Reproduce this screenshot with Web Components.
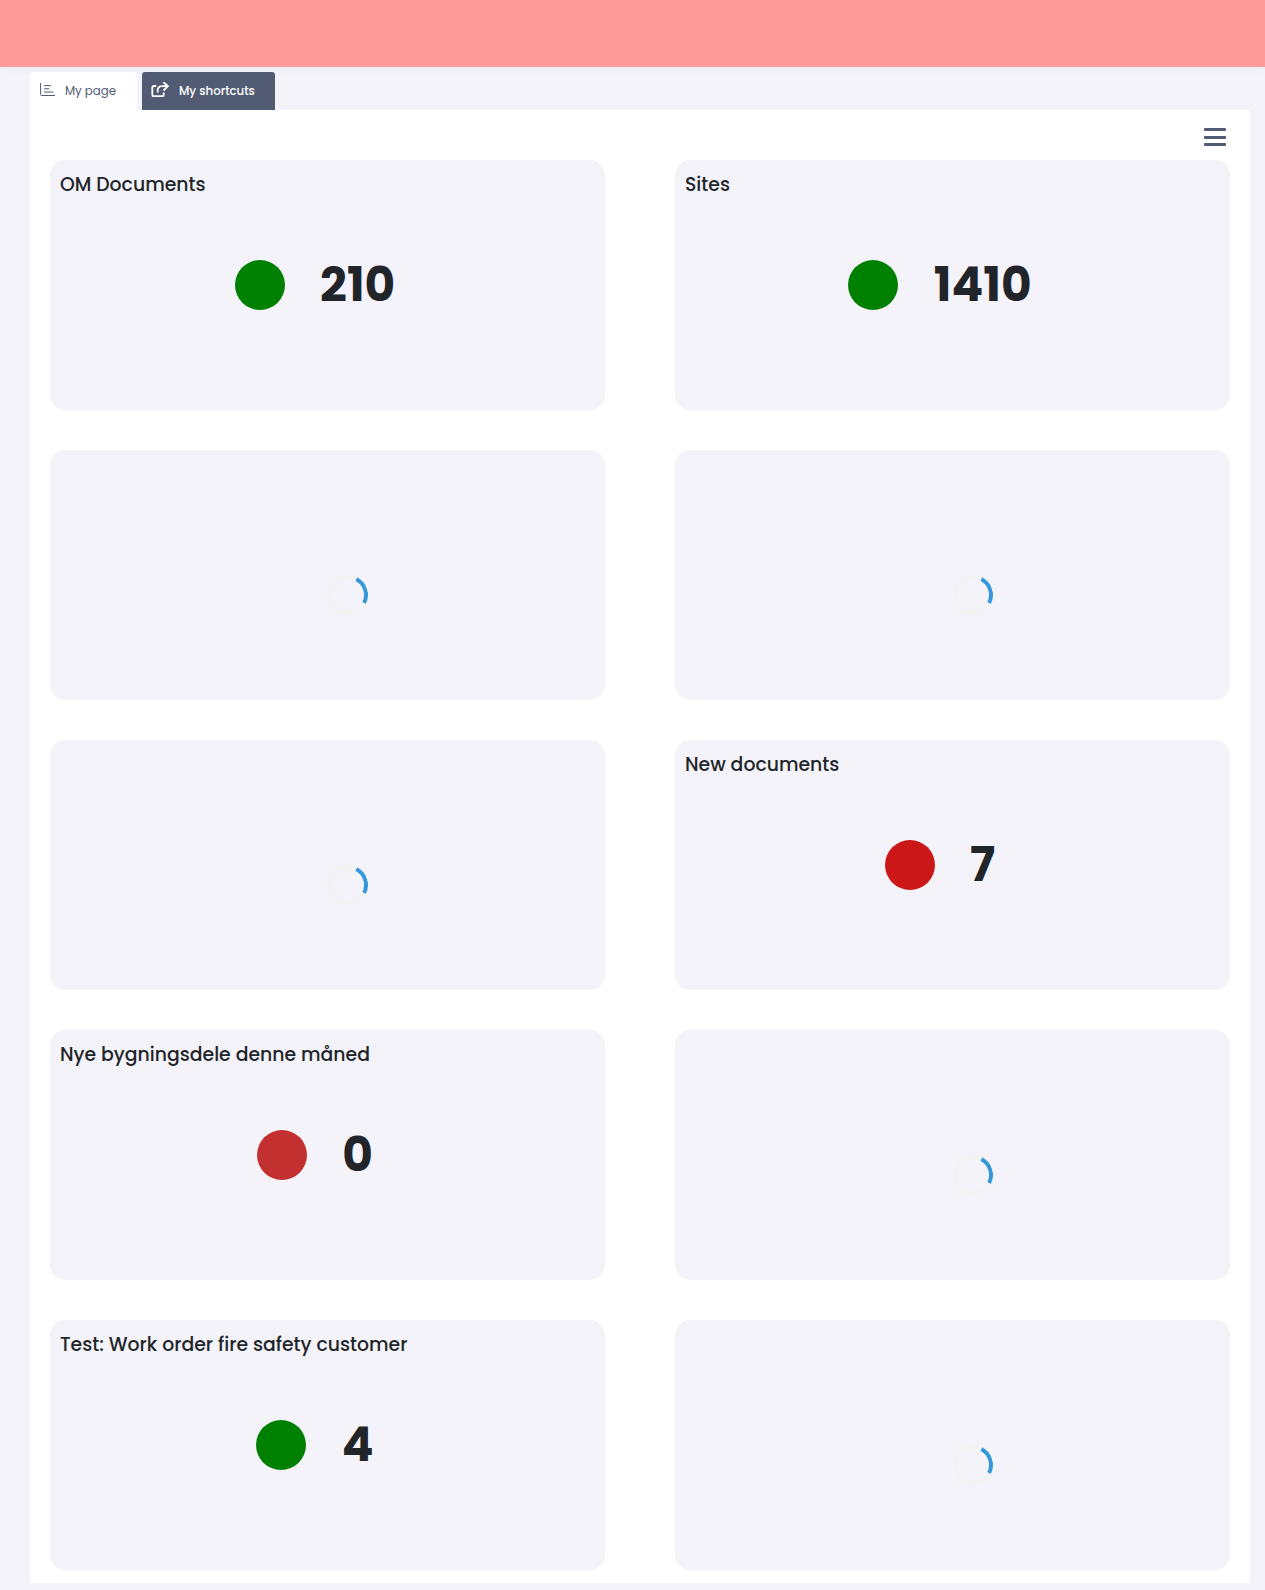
<!DOCTYPE html>
<html lang="en">
<head>
<meta charset="utf-8">
<title>My page</title>
<style>
html,body{margin:0;padding:0}
body{background:#f4f3f9;font-family:Poppins,Inter,"Noto Sans",sans-serif;font-size:11.75px;color:#212529}
</style>
</head>
<body>
<dash-page></dash-page>
<script>
const define = (name, html, init) => customElements.define(name, class extends HTMLElement {
  connectedCallback() {
    if (this.shadowRoot) return;
    const t = document.createElement('template');
    t.innerHTML = html;
    this.attachShadow({mode: 'open'}).append(t.content.cloneNode(true));
    if (init) init(this, this.shadowRoot);
  }
});

define('top-banner', `<style>:host{display:block;height:67px;background:#ff9b9b;box-shadow:0 2px 10px rgba(60,60,90,.03)}</style>`);

define('page-tab', `<style>
:host{display:flex;box-sizing:border-box;height:38px;border-radius:3px 3px 0 0;background:#fff;color:#515b73;font-weight:400;line-height:38px;padding-left:9px;white-space:nowrap}
:host([dark]){background:#515b73;color:#fff;font-weight:500}
::slotted(svg){display:block;flex:none;margin:9px 9px 0 0}
</style><slot></slot>`);

define('menu-button', `<style>
:host{display:flex;flex-direction:column;gap:4.5px;width:22px}
i{height:3px;background:#515b73;border-radius:1px}
</style><i></i><i></i><i></i>`);

define('load-spinner', `<style>
:host{display:block;box-sizing:border-box;width:40px;height:40px;border:4px solid #f3f3f3;border-top-color:#3498db;border-radius:50%;transform:rotate(72deg)}
</style>`);

define('dash-card', `<style>
:host{display:block;box-sizing:border-box;height:250px;border-radius:15px;background:#f4f3f9;padding:10px}
.busy{padding:115px 0 0 267.5px}
.title{height:30px;line-height:30px;font-size:18.83px;font-weight:500;white-space:nowrap}
.metric{display:flex;align-items:center;justify-content:center;gap:35.3px;height:50px;margin-top:60px;padding-right:25px}
.dot{width:50px;height:50px;border-radius:50%;background:var(--dot,green)}
.value{font-size:47px;font-weight:700;line-height:50px;padding-bottom:1px}
</style><div id="body"></div>`, (el, root) => {
  const b = root.getElementById('body'), a = n => el.getAttribute(n);
  b.innerHTML = a('label')
    ? `<div class="title">${a('label')}</div>
       <div class="metric"><div class="dot"></div><div class="value">${a('value')}</div></div>`
    : `<div class="busy"><load-spinner></load-spinner></div>`;
});

define('dash-page', `<style>
:host{display:block;height:1590px;overflow:hidden}
.wrap{padding:5px 15px 0 30px}
nav{display:flex;gap:5px}
.one{width:107px}.two{width:133px}
main{background:#fff;box-sizing:border-box;height:1473px;padding:0 20px}
.tools{display:flex;justify-content:flex-end;height:32px;padding:18px 4px 0 0}
.grid{display:grid;grid-template-columns:555px 555px;gap:40px 70px}
</style>
<top-banner></top-banner>
<div class="wrap">
<nav>
<page-tab class="one">
<svg width="17" height="18" viewBox="0 0 17 18" fill="none" stroke="#515b73" stroke-linecap="round"><path d="M1.6 2.5v11q0 1 1 1h13M5.5 4.6h6.3M5.5 7.8h4.5M5.5 11h8.5"/></svg>
<span>My page</span></page-tab>
<page-tab class="two" dark>
<svg width="19" height="18" viewBox="0 0 19 18" fill="none" stroke="#fff" stroke-width="1.8" stroke-linecap="round" stroke-linejoin="round"><path d="M4.5 5H3Q1.3 5 1.3 6.7v7.2q0 1.3 1.3 1.3h8.8q1.3 0 1.3-1.3V12.2M6.7 10.8c-.6-3.8 1.1-5.6 4.4-5.6h5.4M13 1.7l4 3.5-4 3.8"/></svg>
<span>My shortcuts</span></page-tab>
</nav>
<main>
<div class="tools"><menu-button></menu-button></div>
<div class="grid">
<dash-card label="OM Documents" value="210"></dash-card>
<dash-card label="Sites" value="1410"></dash-card>
<dash-card></dash-card>
<dash-card></dash-card>
<dash-card></dash-card>
<dash-card label="New documents" value="7" style="--dot:#cb1717"></dash-card>
<dash-card label="Nye bygningsdele denne måned" value="0" style="--dot:#c33030"></dash-card>
<dash-card></dash-card>
<dash-card label="Test: Work order fire safety customer" value="4"></dash-card>
<dash-card></dash-card>
</div>
</main>
</div>`);
</script>
</body>
</html>
